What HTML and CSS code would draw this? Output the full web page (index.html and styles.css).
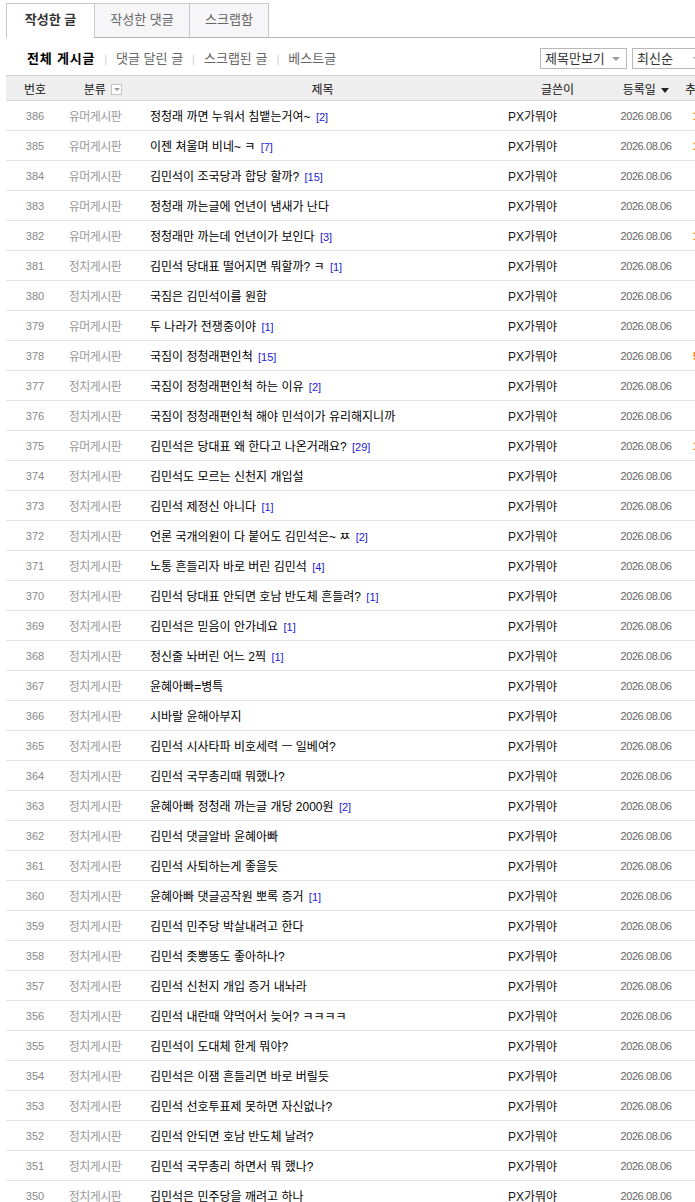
FILE: index.html
```html
<!DOCTYPE html>
<html>
	<head>
		<meta charset="utf-8">
		<meta content="width=device-width, initial-scale=1" name="viewport" />
		<link rel="stylesheet" href="styles.css">
	</head>
	<body>
		<div class="tabs">
			<div class="tab on">작성한 글</div>
			<div class="tab t2">작성한 댓글</div>
			<div class="tab t3">스크랩함</div>
		</div>

		<div class="filter">
			<div class="menu">
				<span class="cur">전체 게시글</span><span class="bar">|</span><span>댓글 달린 글</span><span class="bar">|</span><span>스크랩된 글</span><span class="bar">|</span><span>베스트글</span>
			</div>
			<div class="sel s1">제목만보기 <i class="arr"></i></div>
			<div class="sel s2">최신순 <i class="arr"></i></div>
		</div>

		<table class="board">
			<colgroup>
				<col class="c-num"><col class="c-cat"><col class="c-title"><col class="c-name"><col class="c-date"><col class="c-like">
			</colgroup>
			<thead>
				<tr>
					<th>번호</th>
					<th class="h-cat">분류 <span class="drop"></span></th>
					<th>제목</th>
					<th>글쓴이</th>
					<th>등록일 <i class="tri"></i></th>
					<th class="h-like">추천</th>
				</tr>
			</thead>
			<tbody id="list"></tbody>
		</table>

		<script>
			const rows = [
				[386, "유머게시판", "정청래 까면 누워서 침뱉는거여~", 2, "1"],
				[385, "유머게시판", "이젠 쳐울며 비네~ ㅋ", 7, "1"],
				[384, "유머게시판", "김민석이 조국당과 합당 할까?", 15, ""],
				[383, "유머게시판", "정청래 까는글에 언년이 냄새가 난다", 0, ""],
				[382, "유머게시판", "정청래만 까는데 언년이가 보인다", 3, "1"],
				[381, "정치게시판", "김민석 당대표 떨어지면 뭐할까? ㅋ", 1, ""],
				[380, "정치게시판", "국짐은 김민석이를 원함", 0, ""],
				[379, "유머게시판", "두 나라가 전쟁중이야", 1, ""],
				[378, "유머게시판", "국짐이 정청래편인척", 15, "5"],
				[377, "정치게시판", "국짐이 정청래편인척 하는 이유", 2, ""],
				[376, "정치게시판", "국짐이 정청래편인척 해야 민석이가 유리해지니까", 0, ""],
				[375, "유머게시판", "김민석은 당대표 왜 한다고 나온거래요?", 29, "1"],
				[374, "정치게시판", "김민석도 모르는 신천지 개입설", 0, ""],
				[373, "정치게시판", "김민석 제정신 아니다", 1, ""],
				[372, "정치게시판", "언론 국개의원이 다 붙어도 김민석은~ ㅉ", 2, ""],
				[371, "정치게시판", "노통 흔들리자 바로 버린 김민석", 4, ""],
				[370, "정치게시판", "김민석 당대표 안되면 호남 반도체 흔들려?", 1, ""],
				[369, "정치게시판", "김민석은 믿음이 안가네요", 1, ""],
				[368, "정치게시판", "정신줄 놔버린 어느 2찍", 1, ""],
				[367, "정치게시판", "윤혜아빠=병특", 0, ""],
				[366, "정치게시판", "시바랄 윤해아부지", 0, ""],
				[365, "정치게시판", "김민석 시사타파 비호세력 ㅡ 일베여?", 0, ""],
				[364, "정치게시판", "김민석 국무총리때 뭐했나?", 0, ""],
				[363, "정치게시판", "윤혜아빠 정청래 까는글 개당 2000원", 2, ""],
				[362, "정치게시판", "김민석 댓글알바 윤혜아빠", 0, ""],
				[361, "정치게시판", "김민석 사퇴하는게 좋을듯", 0, ""],
				[360, "정치게시판", "윤혜아빠 댓글공작원 뽀록 증거", 1, ""],
				[359, "정치게시판", "김민석 민주당 박살내려고 한다", 0, ""],
				[358, "정치게시판", "김민석 좃뽕똥도 좋아하나?", 0, ""],
				[357, "정치게시판", "김민석 신천지 개입 증거 내놔라", 0, ""],
				[356, "정치게시판", "김민석 내란때 약먹어서 늦어? ㅋㅋㅋㅋ", 0, ""],
				[355, "정치게시판", "김민석이 도대체 한게 뭐야?", 0, ""],
				[354, "정치게시판", "김민석은 이잼 흔들리면 바로 버릴듯", 0, ""],
				[353, "정치게시판", "김민석 선호투표제 못하면 자신없나?", 0, ""],
				[352, "정치게시판", "김민석 안되면 호남 반도체 날려?", 0, ""],
				[351, "정치게시판", "김민석 국무총리 하면서 뭐 했나?", 0, ""],
				[350, "정치게시판", "김민석은 민주당을 깨려고 하나", 0, ""]
			];

			let html = "";
			for (const r of rows) {
				let cmt = r[3] ? ` <span class="cmt">[${r[3]}]</span>` : "";
				html += `<tr>
					<td class="num">${r[0]}</td>
					<td class="cat">${r[1]}</td>
					<td class="title">${r[2]}${cmt}</td>
					<td class="name">PX가뭐야</td>
					<td class="date">2026.08.06</td>
					<td class="like">${r[4]}</td>
				</tr>`;
			}
			document.getElementById("list").innerHTML = html;
		</script>
	</body>
</html>
```

FILE: styles.css
```css
html, body {
	overflow-x: hidden;
}
body {
	margin: 0;
	background-color: #fff;
	color: #000;
	font-family: "Liberation Sans", "Noto Sans CJK KR", sans-serif;
	font-size: 12px;
	width: 695px;
}

/* tabs */
.tabs {
	display: flex;
	margin: 3px 0 0 6px;
	border-bottom: 1px solid #b4b4b4;
	height: 34px;
}
.tab {
	box-sizing: border-box;
	height: 34px;
	line-height: 32px;
	text-align: center;
	font-size: 13px;
	color: #666;
	background-color: #f6f6f8;
	border: 1px solid #c8c8cc;
	border-left: none;
	border-bottom: none;
}
.tab.on {
	width: 89px;
	color: #333;
	font-weight: bold;
	background-color: #fff;
	border-left: 1px solid #c8c8cc;
	height: 35px;
	margin-bottom: -1px;
}
.t2 { width: 95px; }
.t3 { width: 79px; }

/* filter row */
.filter {
	display: flex;
	align-items: center;
	margin: 10px 0 6px 0;
	height: 21px;
}
.menu {
	flex: 1;
	padding-left: 27px;
	font-size: 13px;
	color: #666;
	line-height: 21px;
}
.menu .cur {
	color: #000;
	font-weight: bold;
	letter-spacing: 0.8px;
}
.menu .bar {
	color: #d0d0d0;
	font-size: 11px;
	margin: 0 9px;
}
.sel {
	box-sizing: border-box;
	height: 21px;
	line-height: 19px;
	border: 1px solid #b9b9b9;
	font-size: 13px;
	color: #333;
	padding-left: 4px;
	position: relative;
	background: #fff;
}
.s1 {
	width: 87px;
	margin-right: 5px;
}
.s2 {
	width: 70px;
	margin-right: -7px;
}
.arr {
	position: absolute;
	right: 6px;
	top: 8px;
	border-left: 4px solid transparent;
	border-right: 4px solid transparent;
	border-top: 4px solid #999;
}
.s2 .arr {
	right: 0;
}

/* board */
.board {
	border-collapse: collapse;
	table-layout: fixed;
	width: 704px;
	margin-left: 6px;
}
.c-num { width: 58px; }
.c-cat { width: 76px; }
.c-title { width: 365px; }
.c-name { width: 105px; }
.c-date { width: 72px; }
.c-like { width: 28px; }

.board th {
	height: 24px;
	padding: 0;
	background-color: #eeeeee;
	border-top: 1px solid #cfcfcf;
	border-bottom: 1px solid #d6d6d6;
	font-weight: normal;
	font-size: 12px;
	color: #111;
	white-space: nowrap;
}
.h-cat {
	padding-left: 2px !important;
}
.drop {
	display: inline-block;
	box-sizing: border-box;
	width: 11px;
	height: 11px;
	border: 1px solid #c4c4c4;
	background: #fff;
	vertical-align: -1px;
	margin-left: 2px;
	position: relative;
}
.drop::after {
	content: "";
	position: absolute;
	left: 2px;
	top: 3px;
	border-left: 3px solid transparent;
	border-right: 3px solid transparent;
	border-top: 3px solid #999;
}
.tri {
	display: inline-block;
	border-left: 4px solid transparent;
	border-right: 4px solid transparent;
	border-top: 5px solid #222;
	vertical-align: 1px;
	margin-left: 2px;
}
.h-like {
	text-align: left;
	padding-left: 3px !important;
}

.board td {
	height: 29px;
	padding: 0;
	border-bottom: 1px solid #e3e3e3;
	white-space: nowrap;
	overflow: hidden;
}
.num {
	text-align: center;
	color: #888;
	font-size: 11px;
}
.cat {
	text-align: center;
	padding-right: 14px !important;
	color: #999;
	font-size: 12px;
	letter-spacing: -0.5px;
}
.title {
	padding-left: 10px !important;
	font-size: 12px;
	color: #000;
}
.cmt {
	color: #1a1ad6;
	font-size: 11px;
	margin-left: 2px;
}
.name {
	padding-left: 3px !important;
	font-size: 12px;
	color: #111;
}
.date {
	text-align: center;
	color: #666;
	font-size: 11px;
	letter-spacing: -0.4px;
}
.like {
	text-align: left;
	padding-left: 11px !important;
	color: #f27b00;
	font-size: 11px;
	font-weight: bold;
}
```
